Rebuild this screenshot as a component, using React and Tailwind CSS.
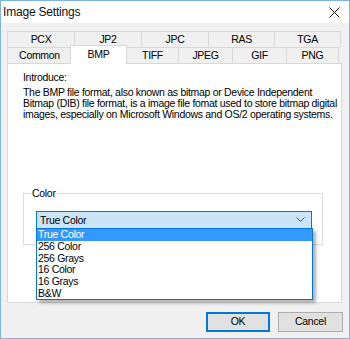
import React from 'react'

const font = { fontFamily: '"Liberation Sans", Arial, sans-serif' }

const topTabs = [
  { name: 'PCX', w: 'w-[67px]' },
  { name: 'JP2', w: 'w-[67px]' },
  { name: 'JPC', w: 'w-[67px]' },
  { name: 'RAS', w: 'w-[66px]' },
  { name: 'TGA', w: 'w-[67px]' },
]

const bottomTabs = [
  { name: 'Common', w: 'w-[64px]' },
  { name: 'BMP', w: 'w-[57px]', active: true },
  { name: 'TIFF', w: 'w-[52px]' },
  { name: 'JPEG', w: 'w-[54px]' },
  { name: 'GIF', w: 'w-[54px]' },
  { name: 'PNG', w: 'w-[53px]' },
]

const colors = ['True Color', '256 Color', '256 Grays', '16 Color', '16 Grays', 'B&W']

const App = () => {
  return (
    <div className="w-[350px] h-[339px] flex flex-col border border-[#7fb5e6] bg-[#f0f0f0] text-black overflow-hidden">
      {/* Title bar */}
      <div className="h-[22px] shrink-0 bg-white flex items-center justify-between pl-[2px] pr-[8px]">
        <span className="text-[12px] leading-none text-[#111] tracking-[-0.2px]" style={font}>
          Image Settings
        </span>
        <svg width="11" height="11" viewBox="0 0 11 11" className="mr-[1px]">
          <path d="M0.5 0.5 L10.5 10.5 M10.5 0.5 L0.5 10.5" stroke="#111" strokeWidth="1" />
        </svg>
      </div>

      {/* Body */}
      <div className="flex-1 flex flex-col pt-[8px] pl-[6px] pr-[7px] text-[10.5px] tracking-[-0.3px]" style={font}>
        {/* Tab rows */}
        <div className="flex leading-none h-[16px] shrink-0">
          {topTabs.map((t, i) => (
            <div
              key={t.name}
              className={`${t.w} h-[16px] flex items-center justify-center border-t border-l border-[#d9d9d9] ${i === topTabs.length - 1 ? 'border-r' : ''}`}
            >
              {t.name}
            </div>
          ))}
        </div>
        <div className="flex leading-none h-[16px] shrink-0 items-end">
          {bottomTabs.map((t, i) =>
            t.active ? (
              <div
                key={t.name}
                className={`${t.w} h-[19px] -mx-[1px] mb-[-1px] relative z-10 bg-white border-t border-l border-r border-[#d9d9d9] flex items-start justify-center pt-[3px]`}
              >
                {t.name}
              </div>
            ) : (
              <div
                key={t.name}
                className={`${t.w} h-[16px] flex items-center justify-center border-t border-l border-[#d9d9d9] ${i === bottomTabs.length - 1 ? 'border-r' : ''}`}
              >
                {t.name}
              </div>
            )
          )}
        </div>

        {/* Panel */}
        <div className="w-[335px] h-[240px] shrink-0 bg-white border border-[#d9d9d9] relative pl-[15px] pt-[8px] leading-[11px]">
          <div>Introduce:</div>
          <p className="mt-[4px] whitespace-nowrap">
            The BMP file format, also known as bitmap or Device Independent
            <br />
            Bitmap (DIB) file format, is a image file fomat used to store bitmap digital
            <br />
            images, especially on Microsoft Windows and OS/2 operating systems.
          </p>

          {/* Group box */}
          <div className="mt-[73px] w-[300px] h-[52px] border border-[#dcdcdc] relative pt-[17px] pl-[12px]">
            <span className="absolute -top-[6px] left-[7px] bg-white px-[1px] leading-[11px]">Color</span>
            <div className="w-[276px] h-[18px] border border-[#0078d7] bg-[#cce4f7] flex items-center justify-between pl-[3px] pr-[6px]">
              <span>True Color</span>
              <svg width="9" height="6" viewBox="0 0 9 6">
                <path d="M0.5 0.5 L4.5 4.5 L8.5 0.5" fill="none" stroke="#555" strokeWidth="1" />
              </svg>
            </div>

            {/* Open dropdown list */}
            <div className="absolute top-[34px] left-[12px] w-[277px] bg-white border border-[#0078d7] shadow-[3px_3px_3px_rgba(0,0,0,0.3)] z-20">
              {colors.map((c, i) => (
                <div
                  key={c}
                  className={`h-[11.7px] flex items-center pl-[1px] ${i === 0 ? 'bg-[#3399ff] text-white' : ''}`}
                >
                  {c}
                </div>
              ))}
            </div>
          </div>
        </div>

        {/* Buttons */}
        <div className="flex justify-end gap-[8px] mt-[9px]">
          <button className="w-[64px] h-[20px] bg-[#e1e1e1] border border-[#0078d7] shadow-[inset_0_0_0_1px_#0078d7]">OK</button>
          <button className="w-[65px] h-[20px] bg-[#e1e1e1] border border-[#adadad] mr-[-1px]">Cancel</button>
        </div>
      </div>
    </div>
  )
}

export default App
